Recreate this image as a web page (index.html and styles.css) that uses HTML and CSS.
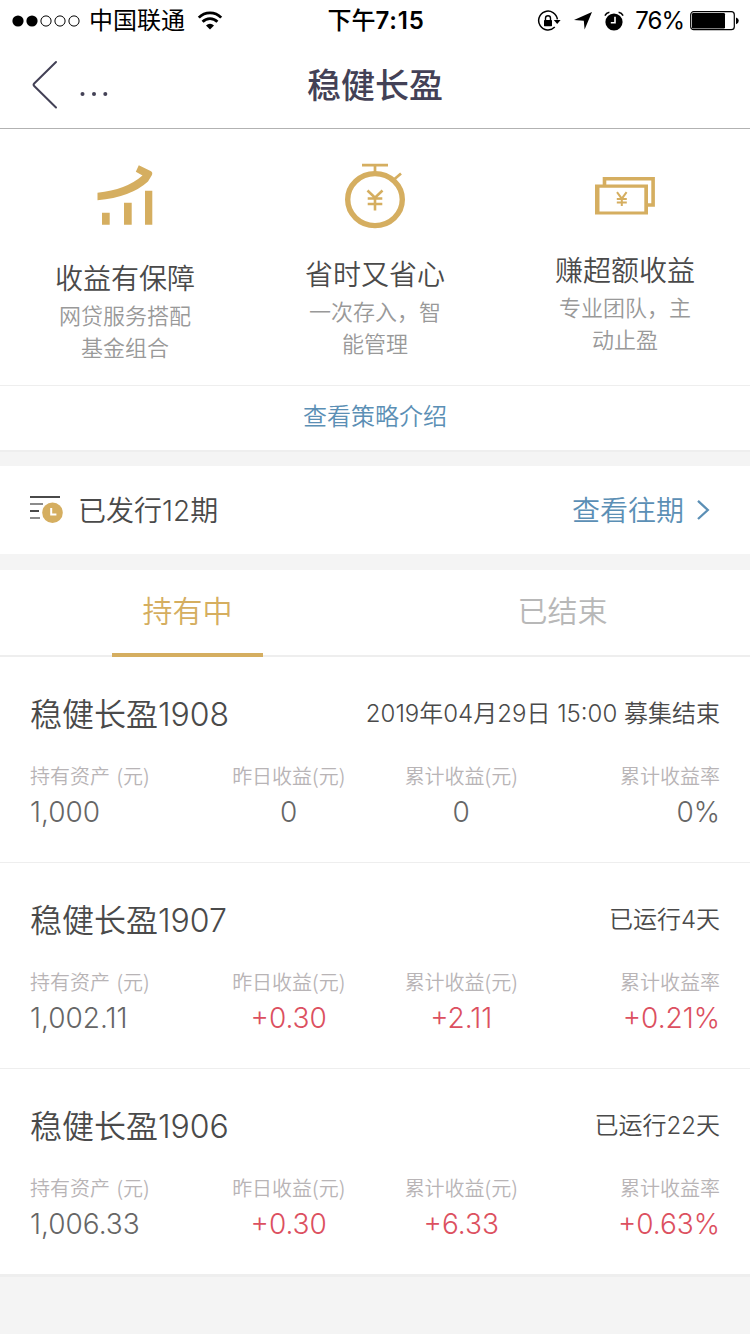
FILE: index.html
```html
<!DOCTYPE html>
<html lang="zh-CN">
<head>
    <meta charset="UTF-8">
    <meta name="viewport" content="width=device-width, initial-scale=1.0">
    <title>稳健长盈</title>
    <link rel="stylesheet" href="styles.css">
</head>
<body>

    <!-- Status bar -->
    <div class="status-bar">
        <div class="status-left">
            <svg class="signal" width="70" height="14" viewBox="0 0 70 14">
                <circle cx="6" cy="7" r="5.6"/>
                <circle cx="20" cy="7" r="5.6"/>
                <circle class="empty" cx="34" cy="7" r="5.1"/>
                <circle class="empty" cx="48" cy="7" r="5.1"/>
                <circle class="empty" cx="62" cy="7" r="5.1"/>
            </svg>
            <span class="carrier">中国联通</span>
            <svg class="wifi" width="26" height="20" viewBox="0 0 26 20">
                <path d="M1.8 6.6a15.6 15.6 0 0 1 22.4 0M5.6 10.7a10.4 10.4 0 0 1 14.8 0" fill="none" stroke="#000" stroke-width="2.8"/>
                <path d="M9 14.4a6 6 0 0 1 8 0L13 18.6z"/>
            </svg>
        </div>
        <div class="status-time">下午<span class="clock">7:15</span></div>
        <div class="status-right">
            <svg class="lock" width="24" height="22" viewBox="0 0 24 22">
                <path d="M17.8 17.1A9.4 9.4 0 1 1 20.4 9.4" fill="none" stroke="#000" stroke-width="1.5"/>
                <path d="M16.8 10h6.8l-3.4 4z"/>
                <rect x="7" y="10" width="8" height="6.2" rx=".6"/>
                <path d="M8.5 10.5V8.2a2.5 2.5 0 0 1 5 0v2.3" fill="none" stroke="#000" stroke-width="1.4"/>
            </svg>
            <svg class="arrow" width="20" height="20" viewBox="0 0 20 20">
                <path d="M19 1L11.6 18.6L10.8 9.8L1 9z"/>
            </svg>
            <svg class="alarm" width="20" height="20" viewBox="0 0 20 20">
                <circle cx="10" cy="11" r="8.6"/>
                <path d="M.9 4.6Q2.2 1.8 5.4 1.2M14.6 1.2Q17.8 1.8 19.1 4.6" fill="none" stroke="#000" stroke-width="1.5"/>
                <path d="M11 5.8v6H6.8" fill="none" stroke="#fff" stroke-width="1.6"/>
            </svg>
            <span class="percent">76%</span>
            <svg class="battery" width="50" height="20" viewBox="0 0 50 20">
                <rect x=".7" y=".7" width="43.6" height="18" rx="3" fill="none" stroke="#000" stroke-width="1.2"/>
                <rect x="2" y="2" width="33" height="15.4" rx="1.2"/>
                <path d="M46 6.4q2.8 1 2.8 3.4t-2.8 3.4z"/>
            </svg>
        </div>
    </div>

    <!-- Navigation -->
    <div class="nav">
        <div class="nav-back">
            <svg width="28" height="50" viewBox="0 0 28 50">
                <path d="M25 2L3.2 23.5Q2 24.8 3.2 26L25 47.5" fill="none" stroke="#434156" stroke-width="2" stroke-linecap="round"/>
            </svg>
            <svg width="30" height="6" viewBox="0 0 30 6" fill="#434156">
                <circle cx="3.5" cy="3" r="2"/>
                <circle cx="15" cy="3" r="2"/>
                <circle cx="26.3" cy="3" r="2"/>
            </svg>
        </div>
        <h1 class="nav-title">稳健长盈</h1>
    </div>

    <!-- Features -->
    <div class="features">
        <div class="feature">
            <div class="feature-icon icon-growth">
                <svg width="60" height="68" viewBox="0 0 60 68" fill="#d5ae60">
                    <path d="M2.5 33.8Q31 31 47.5 16.6L40.8 12.8L43.8 6.3L55.6 12Q58.2 13.6 56.8 16.2L53 22.4Q36 38 2.5 41.2z"/>
                    <path d="M7 53.7h7.7v12H7zM29 43.7h7.7v22H29zM50 31.7h7.3v34H50z"/>
                </svg>
            </div>
            <h2 class="feature-title">收益有保障</h2>
            <p class="feature-text">网贷服务搭配基金组合</p>
        </div>
        <div class="feature">
            <div class="feature-icon icon-time">
                <svg width="60" height="70" viewBox="0 0 60 70" fill="none" stroke="#d5ae60">
                    <ellipse cx="30" cy="40.6" rx="27.3" ry="26" stroke-width="5.4"/>
                    <path d="M17 6.2h26M30 6.5v9M49 20.5l7-6" stroke-width="2.7"/>
                    <path d="M22.5 31.5l7.5 7.2 7.5-7.2M30 38.5v13M22.7 39.5h14.6M22.7 45h14.6" stroke-width="2.6"/>
                </svg>
            </div>
            <h2 class="feature-title">省时又省心</h2>
            <p class="feature-text">一次存入，智能管理</p>
        </div>
        <div class="feature">
            <div class="feature-icon icon-money">
                <svg width="60" height="68" viewBox="0 0 60 68" fill="none" stroke="#d5ae60">
                    <path d="M9.5 26.5v-6.7h48.6v26.2h-6" stroke-width="3.6"/>
                    <path d="M0 25.4h53v30.2H0zM4.5 28.8v23.6h44.8V28.8z" fill="#d5ae60" fill-rule="evenodd" stroke="none"/>
                    <path d="M22 33.2l4.8 6.5 4.8-6.5M26.8 39.5V47M21.8 40h10M21.8 43.5h10" stroke-width="2"/>
                </svg>
            </div>
            <h2 class="feature-title">赚超额收益</h2>
            <p class="feature-text">专业团队，主动止盈</p>
        </div>
    </div>
    <div class="intro-link">查看策略介绍</div>

    <!-- Issued periods -->
    <div class="issued">
        <svg width="34" height="30" viewBox="0 0 34 30">
            <path d="M0 2h30" stroke="#4a4a4a" stroke-width="2"/>
            <path d="M0 9h13M0 23h10" stroke="#8b8b8b" stroke-width="2"/>
            <path d="M0 16h9" stroke="#4a4a4a" stroke-width="2"/>
            <circle cx="22.5" cy="17.8" r="10.3" fill="#d5ae60"/>
            <path d="M21.2 13v6.4h5.2" fill="none" stroke="#fff" stroke-width="2"/>
        </svg>
        <span class="issued-count">已发行12期</span>
        <span class="issued-more">查看往期</span>
        <svg width="16" height="24" viewBox="0 0 16 24">
            <path d="M3 2.8l9.8 9.2L3 21" fill="none" stroke="#5b8fb5" stroke-width="2.3"/>
        </svg>
    </div>

    <!-- Tabs -->
    <div class="tabs">
        <div class="tab active">持有中</div>
        <div class="tab">已结束</div>
    </div>

    <!-- Products -->
    <div class="products">
        <div class="product">
            <div class="product-header">
                <span class="product-name">稳健长盈1908</span>
                <span class="product-status">2019年04月29日 15:00 募集结束</span>
            </div>
            <div class="product-data">
                <div class="item"><div class="label">持有资产 (元)</div><div class="value">1,000</div></div>
                <div class="item"><div class="label">昨日收益(元)</div><div class="value">0</div></div>
                <div class="item"><div class="label">累计收益(元)</div><div class="value">0</div></div>
                <div class="item"><div class="label">累计收益率</div><div class="value">0%</div></div>
            </div>
        </div>
        <div class="product">
            <div class="product-header">
                <span class="product-name">稳健长盈1907</span>
                <span class="product-status">已运行4天</span>
            </div>
            <div class="product-data">
                <div class="item"><div class="label">持有资产 (元)</div><div class="value">1,002.11</div></div>
                <div class="item"><div class="label">昨日收益(元)</div><div class="value up">+0.30</div></div>
                <div class="item"><div class="label">累计收益(元)</div><div class="value up">+2.11</div></div>
                <div class="item"><div class="label">累计收益率</div><div class="value up">+0.21%</div></div>
            </div>
        </div>
        <div class="product">
            <div class="product-header">
                <span class="product-name">稳健长盈1906</span>
                <span class="product-status">已运行22天</span>
            </div>
            <div class="product-data">
                <div class="item"><div class="label">持有资产 (元)</div><div class="value">1,006.33</div></div>
                <div class="item"><div class="label">昨日收益(元)</div><div class="value up">+0.30</div></div>
                <div class="item"><div class="label">累计收益(元)</div><div class="value up">+6.33</div></div>
                <div class="item"><div class="label">累计收益率</div><div class="value up">+0.63%</div></div>
            </div>
        </div>
    </div>

</body>
</html>
```
FILE: styles.css
```css
/* Basic Reset */
* {
    margin: 0;
    padding: 0;
    box-sizing: border-box;
}

body {
    width: 750px;
    height: 1334px;
    overflow: hidden;
    font-family: Inter, "Noto Sans CJK SC", sans-serif;
    font-weight: 350;
    color: #4a4a4a;
    background-color: #f4f4f4;
}

svg {
    display: block;
    flex-shrink: 0;
}

/* Status Bar */
.status-bar {
    display: flex;
    height: 41px;
    padding: 1px 10px 0 12px;
    background-color: #fff;
    color: #000;
    font-size: 24px;
    line-height: 40px;
}

.status-left,
.status-right {
    flex: 1;
    display: flex;
    align-items: center;
}

.status-right {
    justify-content: flex-end;
}

.signal .empty {
    fill: none;
    stroke: #000;
    stroke-width: 1;
}

.carrier {
    margin: 0 12px 0 7px;
    font-weight: 400;
}

.status-time {
    font-weight: 500;
}

.clock {
    font-weight: 600;
    letter-spacing: 0.8px;
}

.arrow {
    margin: 0 11px 0 12px;
}

.percent {
    margin: 0 6px 0 11px;
    font-weight: 400;
    letter-spacing: -1px;
}

/* Navigation */
.nav {
    display: flex;
    align-items: center;
    height: 88px;
    border-bottom: 1px solid #b2b2b2;
    background-color: #fff;
    color: #434156;
}

.nav-back {
    display: flex;
    align-items: center;
    gap: 20px;
    width: 250px;
    padding-left: 31px;
}

.nav-back svg + svg {
    margin-top: 18px;
}

.nav-title {
    width: 250px;
    padding-top: 2px;
    font-size: 34px;
    font-weight: 500;
    line-height: 85px;
    text-align: center;
}

/* Features */
.features {
    display: flex;
    height: 257px;
    padding-top: 30px;
    border-bottom: 1px solid #eee;
    background-color: #fff;
}

.feature {
    flex: 1;
    display: flex;
    flex-direction: column;
    align-items: center;
}

.icon-growth {
    height: 100px;
}

.icon-time {
    height: 96px;
}

.icon-money {
    height: 92px;
}

.feature-title {
    font-size: 28px;
    font-weight: 350;
    line-height: 40px;
}

.feature-text {
    width: 134px;
    margin-top: 1px;
    color: #999;
    font-size: 22px;
    line-height: 32px;
    text-align: center;
}

.intro-link {
    height: 66px;
    border-bottom: 2px solid #eee;
    background-color: #fff;
    color: #5b8fb5;
    font-size: 24px;
    line-height: 61px;
    text-align: center;
}

/* Issued Row */
.issued {
    display: flex;
    align-items: center;
    height: 88px;
    margin: 14px 0 16px;
    padding: 0 39px 0 30px;
    background-color: #fff;
    font-size: 28px;
}

.issued-count {
    margin-left: 14px;
    padding-bottom: 2px;
}

.issued-more {
    margin-left: auto;
    margin-right: 11px;
    padding-bottom: 2px;
    color: #5b8fb5;
}

/* Tabs */
.tabs {
    display: flex;
    justify-content: space-around;
    height: 87px;
    border-bottom: 2px solid #eee;
    background-color: #fff;
}

.tab {
    width: 151px;
    height: 87px;
    color: #b8b8b8;
    font-size: 30px;
    line-height: 82px;
    text-align: center;
}

.tab.active {
    border-bottom: 4px solid #d5ae60;
    color: #d5ae60;
}

/* Products */
.products {
    border-bottom: 2px solid #eee;
    background-color: #fff;
}

.product {
    height: 206px;
    padding: 32px 30px 0;
    border-bottom: 1px solid #eee;
}

.product-header {
    display: flex;
    justify-content: space-between;
    align-items: center;
    height: 46px;
}

.product-name {
    font-size: 32px;
}

.product-status {
    padding-bottom: 1px;
    font-size: 24px;
}

.product-data {
    display: flex;
    padding-top: 25px;
}

.item {
    flex: 1;
    text-align: center;
}

.item:first-child {
    text-align: left;
}

.item:last-child {
    text-align: right;
}

.label {
    color: #b8b4b6;
    font-family: "Noto Sans CJK SC", sans-serif;
    font-size: 20px;
    line-height: 32px;
    word-spacing: 2px;
}

.value {
    color: #666;
    font-size: 28px;
    line-height: 40px;
}

.value.up {
    color: #dc5060;
}
```
